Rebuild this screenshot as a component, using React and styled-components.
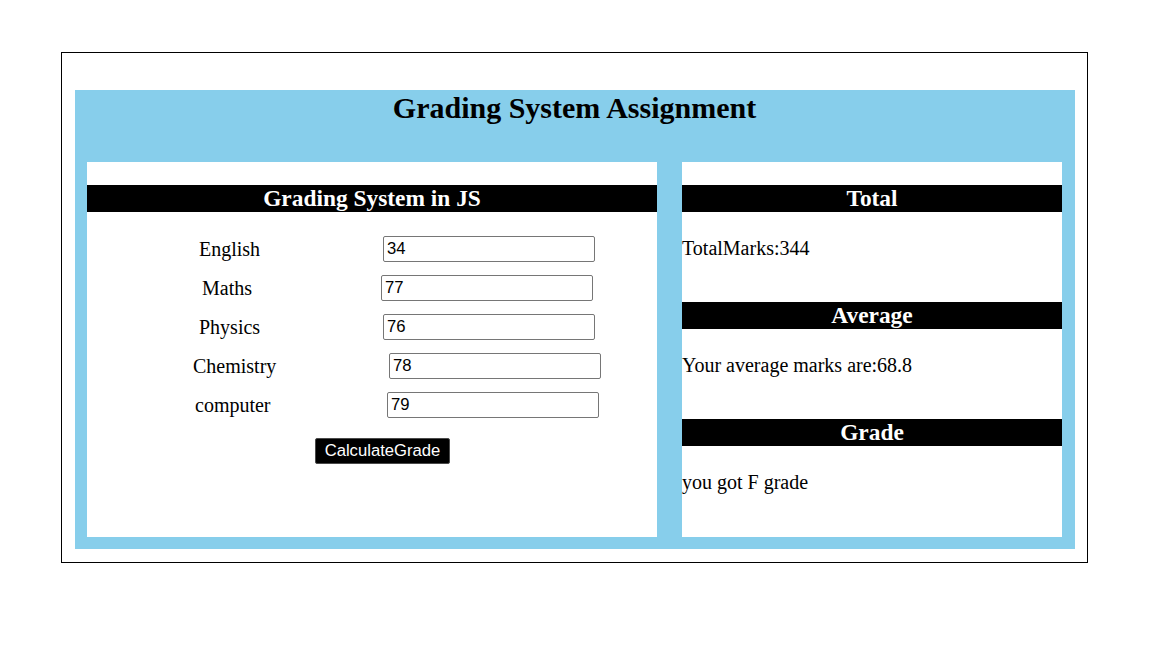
import React from "react";
import styled, { createGlobalStyle } from "styled-components";

const GlobalStyle = createGlobalStyle`
  html, body {
    margin: 0;
    padding: 0;
    background: #ffffff;
    font-family: "Liberation Serif", "Times New Roman", serif;
    color: #000;
  }
`;

const Frame = styled.div`
  box-sizing: border-box;
  width: 1027px;
  height: 511px;
  margin: 52px 0 0 61px;
  border: 1px solid #000;
  padding: 37px 12px 13px 13px;
`;

const Board = styled.div`
  box-sizing: border-box;
  width: 1000px;
  height: 459px;
  background: #87ceeb;
  padding: 0 13px 12px 12px;
  display: flex;
  flex-direction: column;
`;

const Title = styled.h2`
  margin: 0 0 37px;
  font-size: 30px;
  line-height: 35px;
  font-weight: bold;
  text-align: center;
`;

const Columns = styled.div`
  display: flex;
  gap: 25px;
  flex: 1;
`;

const Panel = styled.section`
  box-sizing: border-box;
  width: ${(p) => p.$width}px;
  background: #ffffff;
  padding-top: 23px;
  display: flex;
  flex-direction: column;
`;

const Bar = styled.h3`
  margin: 0;
  height: 27px;
  line-height: 27px;
  background: #000;
  color: #fff;
  font-size: 23.4px;
  font-weight: bold;
  text-align: center;
`;

const Form = styled.div`
  display: flex;
  flex-direction: column;
  gap: 13px;
  margin-top: 24px;
`;

const Row = styled.div`
  display: flex;
  align-items: center;
  height: 26px;
`;

const Label = styled.label`
  box-sizing: border-box;
  margin-left: ${(p) => p.$x}px;
  width: ${(p) => p.$inputX - p.$x}px;
  font-size: 20px;
`;

const Field = styled.input`
  box-sizing: border-box;
  width: 212px;
  height: 26px;
  padding: 0 3px;
  border: 1px solid #767676;
  border-radius: 2px;
  font-family: "Liberation Sans", Arial, sans-serif;
  font-size: 16.67px;
  color: #000;
  background: #fff;
  outline: none;
`;

const Button = styled.button`
  box-sizing: border-box;
  margin: 20px 0 0 228px;
  width: 135px;
  height: 26px;
  padding: 0;
  background: #000;
  color: #fff;
  border: 1px solid #4a4a4a;
  border-radius: 2px;
  font-family: "Liberation Sans", Arial, sans-serif;
  font-size: 16.67px;
  cursor: pointer;
`;

const Result = styled.p`
  margin: 25px 0 ${(p) => p.$after}px;
  font-size: 20px;
  line-height: 23px;
`;

const subjects = [
  { name: "English", value: "34", x: 112, inputX: 296 },
  { name: "Maths", value: "77", x: 115, inputX: 294 },
  { name: "Physics", value: "76", x: 112, inputX: 296 },
  { name: "Chemistry", value: "78", x: 106, inputX: 302 },
  { name: "computer", value: "79", x: 108, inputX: 300 },
];

export default function App() {
  return (
    <>
      <GlobalStyle />
      <Frame>
        <Board>
          <Title>Grading System Assignment</Title>
          <Columns>
            <Panel $width={570}>
              <Bar>Grading System in JS</Bar>
              <Form>
                {subjects.map((s) => (
                  <Row key={s.name}>
                    <Label $x={s.x} $inputX={s.inputX}>
                      {s.name}
                    </Label>
                    <Field type="text" defaultValue={s.value} />
                  </Row>
                ))}
              </Form>
              <div>
                <Button>CalculateGrade</Button>
              </div>
            </Panel>
            <Panel $width={380}>
              <Bar>Total</Bar>
              <Result $after={42}>TotalMarks:344</Result>
              <Bar>Average</Bar>
              <Result $after={42}>Your average marks are:68.8</Result>
              <Bar>Grade</Bar>
              <Result $after={0}>you got F grade</Result>
            </Panel>
          </Columns>
        </Board>
      </Frame>
    </>
  );
}
